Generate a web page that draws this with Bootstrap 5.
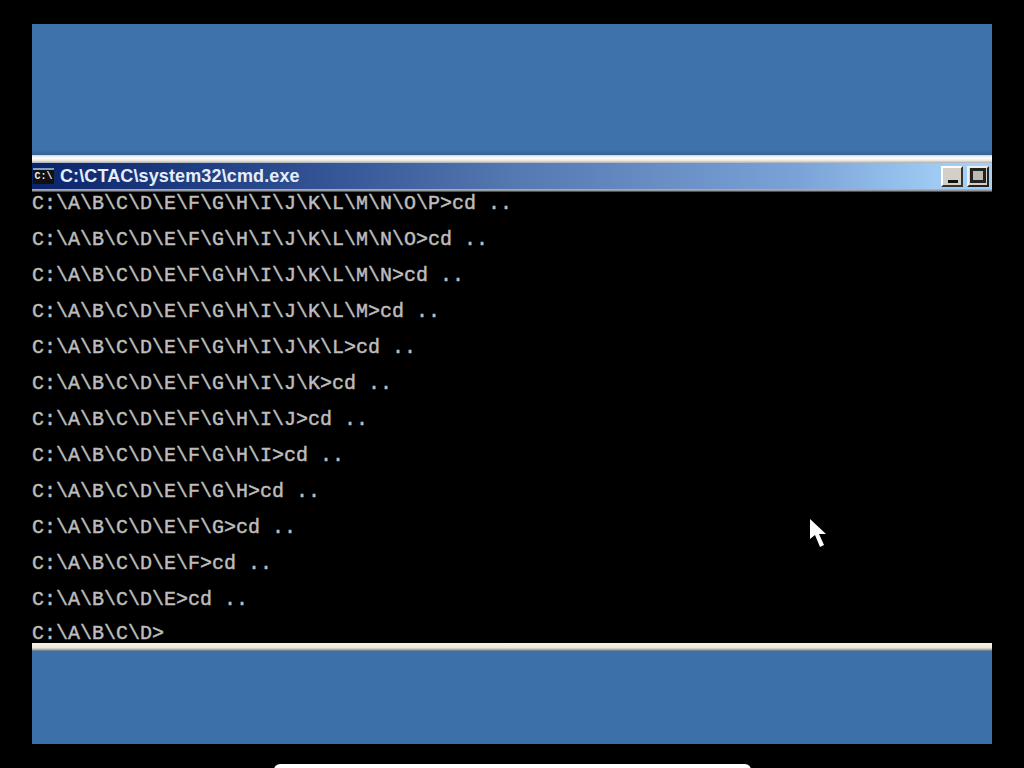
<!DOCTYPE html>
<html lang="en">
<head>
<meta charset="utf-8">
<title>cmd.exe</title>
<link href="https://cdn.jsdelivr.net/npm/bootstrap@5.3.0/dist/css/bootstrap.min.css" rel="stylesheet">
<style>
html,body{height:100%;background:#000;overflow:hidden}
.stage{width:1024px;height:768px;padding:24px 32px;background:#000;position:relative}
.desk{height:720px;background:#3b70a8}
.desk-top{height:131px;background:linear-gradient(#3d72aa 96%,#33618f)}
.desk-bottom{height:93px;background:#3b70a8}
.win-top{height:8px;background:linear-gradient(#c9d3de 0,#ffffff 35%,#e9e6dc 70%,#a8adb8 100%)}
.title-row{height:26px;padding-left:1px;padding-right:3px;background:linear-gradient(90deg,#0a246a 0,#2a4a8e 25%,#5478b0 50%,#7ba3d8 80%,#a0ccf4 95%,#a6d0f6 100%)}
.title-txt{font:bold 18px/26px "Liberation Sans",Arial,sans-serif;color:#e6eefa;margin-left:6px;letter-spacing:.12px}
.sys-ic{width:21px;height:16px;background:#111;border-top:2px solid #7f9fc8;color:#eee;font:bold 10px/14px "Liberation Mono",monospace;text-align:center}
.ctl{width:22px;height:21px;background:#d4d0c8;border:2px solid;border-color:#fff #333 #333 #fff;position:relative}
.ctl-min::after{content:"";position:absolute;left:5px;bottom:2px;width:10px;height:3px;background:#111}
.ctl-max{border-color:#eee #222 #222 #eee}
.ctl-max::after{content:"";position:absolute;left:1px;top:0;width:16px;height:15px;border:3px solid #222;background:#bdbab2}
.title-base{height:3px;background:linear-gradient(#b4b6bc,#8f9095 60%,#222)}
.console{height:451px;background:#000}
.line{height:36px;font:400 20px/24px "Liberation Mono","Courier New",monospace;-webkit-text-stroke:.45px #bdbdbd;color:#bdbdbd;white-space:pre;display:block}
.line:last-child{height:19px;line-height:19px}
.win-bottom{height:8px;background:linear-gradient(#f6f3ea 0,#efe9da 55%,#c8c4b8 75%,#4f6f90 100%)}
.pointer{position:absolute;left:809px;top:518px}
.dock-peek{position:absolute;left:274px;top:764px;width:477px;height:12px;background:#fff;border-radius:8px}
</style>
</head>
<body class="m-0">
<div class="stage">
  <div class="desk d-flex flex-column">
    <div class="desk-top"></div>
    <div class="win-top"></div>
    <div class="title-row d-flex align-items-center">
      <div class="sys-ic">C:\</div>
      <div class="title-txt flex-grow-1">C:\CTAC\system32\cmd.exe</div>
      <div class="d-flex gap-1">
        <div class="ctl ctl-min"></div>
        <div class="ctl ctl-max"></div>
      </div>
    </div>
    <div class="title-base"></div>
    <div class="console">
      <span class="line">C:\A\B\C\D\E\F\G\H\I\J\K\L\M\N\O\P&gt;cd ..</span>
      <span class="line">C:\A\B\C\D\E\F\G\H\I\J\K\L\M\N\O&gt;cd ..</span>
      <span class="line">C:\A\B\C\D\E\F\G\H\I\J\K\L\M\N&gt;cd ..</span>
      <span class="line">C:\A\B\C\D\E\F\G\H\I\J\K\L\M&gt;cd ..</span>
      <span class="line">C:\A\B\C\D\E\F\G\H\I\J\K\L&gt;cd ..</span>
      <span class="line">C:\A\B\C\D\E\F\G\H\I\J\K&gt;cd ..</span>
      <span class="line">C:\A\B\C\D\E\F\G\H\I\J&gt;cd ..</span>
      <span class="line">C:\A\B\C\D\E\F\G\H\I&gt;cd ..</span>
      <span class="line">C:\A\B\C\D\E\F\G\H&gt;cd ..</span>
      <span class="line">C:\A\B\C\D\E\F\G&gt;cd ..</span>
      <span class="line">C:\A\B\C\D\E\F&gt;cd ..</span>
      <span class="line">C:\A\B\C\D\E&gt;cd ..</span>
      <span class="line">C:\A\B\C\D&gt;</span>
    </div>
    <div class="win-bottom"></div>
    <div class="desk-bottom"></div>
  </div>
  <svg class="pointer" width="18" height="32" viewBox="0 0 18 32" aria-hidden="true"><path d="M1 1 L1 21 L6 17 L11 29 L15 27 L10 16 L17 16 Z" fill="#fff"/></svg>
  <div class="dock-peek"></div>
</div>
<script src="https://cdn.jsdelivr.net/npm/bootstrap@5.3.0/dist/js/bootstrap.bundle.min.js"></script>
</body>
</html>
